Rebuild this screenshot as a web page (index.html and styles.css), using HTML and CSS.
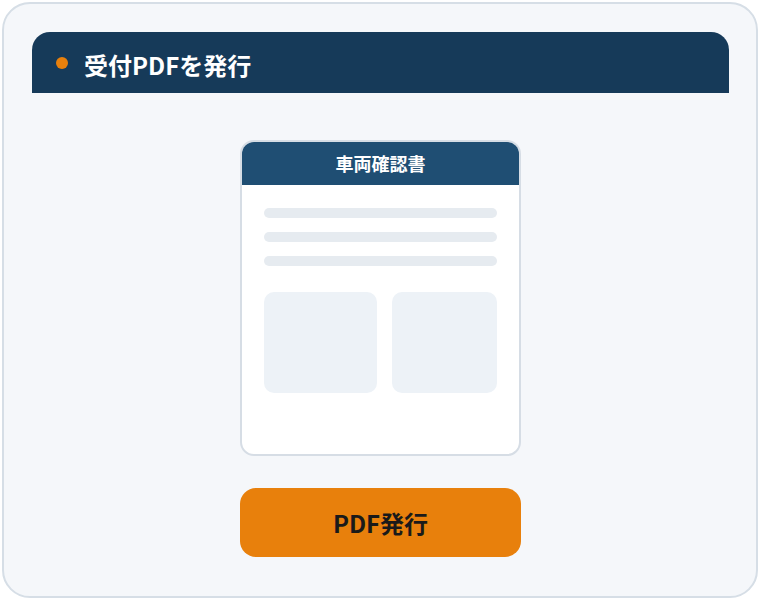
FILE: index.html
```html
<!DOCTYPE html>
<html lang="ja">
<head>
    <meta charset="UTF-8">
    <meta name="viewport" content="width=device-width, initial-scale=1.0">
    <title>受付PDFを発行</title>
    <link rel="stylesheet" href="styles.css">
</head>
<body>
<div class="frame">
    <div class="section-head">
        <span class="dot"></span>
        <h1>受付PDFを発行</h1>
    </div>
    <div class="stage">
        <div class="doc">
            <div class="doc-title">車両確認書</div>
            <div class="doc-body">
                <div class="line"></div>
                <div class="line"></div>
                <div class="line"></div>
                <div class="blocks">
                    <div class="block"></div>
                    <div class="block"></div>
                </div>
            </div>
        </div>
        <button class="issue">PDF発行</button>
    </div>
</div>
</body>
</html>
```

FILE: styles.css
```css
body {
    margin: 0;
    padding: 2px;
    font-family: "Noto Sans CJK JP", "Noto Sans", sans-serif;
    background-color: #ffffff;
}
.frame {
    box-sizing: border-box;
    height: 596px;
    border: 2px solid #d6dee6;
    border-radius: 28px;
    background-color: #f5f7fa;
    padding: 28px 27px 0 28px;
}
.section-head {
    display: flex;
    align-items: center;
    height: 61px;
    padding-left: 24px;
    background-color: #163a59;
    border-radius: 18px 18px 0 0;
}
.dot {
    width: 12px;
    height: 12px;
    border-radius: 50%;
    background-color: #e8800c;
    margin-right: 16px;
}
.section-head h1 {
    margin: 0;
    color: #ffffff;
    font-size: 24px;
    font-weight: 700;
    line-height: 1;
    margin-top: 4px;
}
.stage {
    display: flex;
    flex-direction: column;
    align-items: center;
    padding-top: 47px;
}
.doc {
    box-sizing: border-box;
    width: 281px;
    height: 316px;
    background-color: #ffffff;
    border: 2px solid #d6dde5;
    border-radius: 14px;
    overflow: hidden;
}
.doc-title {
    height: 45px;
    background-color: #1f4e73;
    color: #ffffff;
    font-size: 18px;
    font-weight: 700;
    display: flex;
    align-items: center;
    justify-content: center;
    margin: -2px -2px 0 -2px;
}
.doc-body {
    padding: 23px 22px 0 22px;
    display: flex;
    flex-direction: column;
    gap: 14px;
}
.line {
    height: 10px;
    border-radius: 5px;
    background-color: #e6ebf0;
}
.blocks {
    display: grid;
    grid-template-columns: 113px 105px;
    gap: 15px;
    margin-top: 12px;
}
.block {
    height: 101px;
    border-radius: 10px;
    background-color: #edf2f7;
}
.issue {
    margin-top: 32px;
    width: 281px;
    height: 69px;
    border: none;
    border-radius: 16px;
    background-color: #e8800c;
    color: #1a1a1a;
    font-family: inherit;
    font-size: 24px;
    font-weight: 700;
    cursor: pointer;
}
```
